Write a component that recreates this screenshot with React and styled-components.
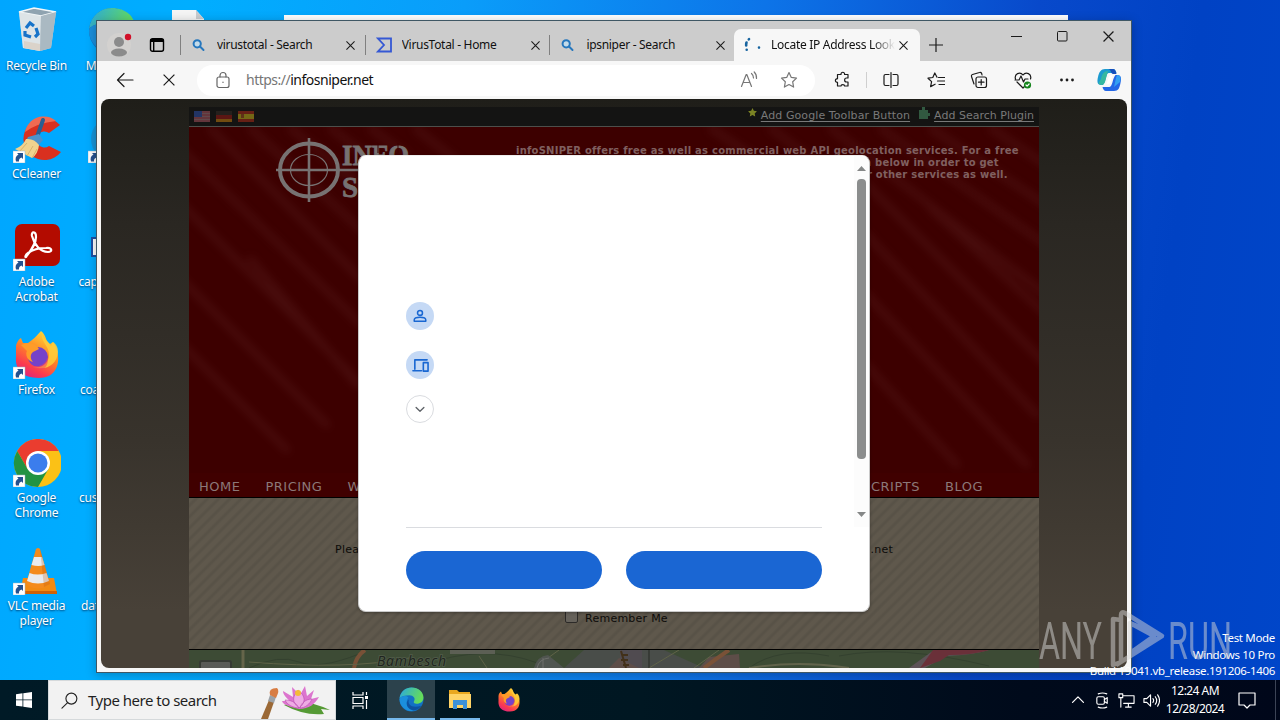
import styled, { createGlobalStyle } from "styled-components";

const GlobalStyle = createGlobalStyle`
  * {
    box-sizing: border-box;
  }
  body {
    margin: 0;
    overflow: hidden;
    font-family: "Noto Sans", "Open Sans", sans-serif;
    font-size: 12px;
  }
  svg {
    display: block;
    flex: none;
  }
`;

const Desktop = styled.div`
  position: relative;
  width: 1280px;
  height: 720px;
  overflow: hidden;
  background: linear-gradient(97deg, #00a6ff 0%, #00aeff 14%, #0a9dfa 34%, #0d74e8 56%, #0849cb 76%, #0042c4 88%, #0046c9 100%);
`;
const IconGrid = styled.div`
  display: grid;
  grid-template-columns: repeat(3, 75px);
  grid-auto-rows: 108px;
`;
const Shortcut = styled.div`
  display: flex;
  flex-direction: column;
  align-items: center;
  padding: 7px 2px 0 0;
  gap: 3px;
`;
const ShortcutLabel = styled.span`
  width: ${(p) => p.$width || 75}px;
  color: white;
  font-size: 12px;
  line-height: 15px;
  letter-spacing: -0.2px;
  text-align: ${(p) => (p.$width ? "left" : "center")};
  white-space: pre-line;
  text-shadow: 0 1px 2px rgba(0, 30, 70, 0.8);
`;

const BackWindow = styled.div`
  position: absolute;
  left: 284px;
  top: 15px;
  width: 784px;
  height: 40px;
  background: white;
`;
const Window = styled.div`
  position: absolute;
  left: 96px;
  top: 20px;
  width: 1036px;
  height: 653px;
  display: flex;
  flex-direction: column;
  background: #f7f7f7;
  border: 1px solid #3f5764;
  box-shadow: 0 2px 10px rgba(0, 0, 0, 0.25);
`;
const TabStrip = styled.div`
  display: flex;
  height: 40px;
  background: #cccccc;
`;
const Profile = styled.div`
  display: flex;
  align-items: center;
  gap: 16px;
  width: 83px;
  padding: 8px 0 0 10px;
`;
const Tab = styled.div`
  display: flex;
  align-items: center;
  width: ${(p) => (p.$active ? 186 : 184.7)}px;
  height: 32px;
  margin-top: 8px;
  padding: 0 ${(p) => (p.$active ? 9 : 7)}px 0 ${(p) => (p.$active ? 10 : 11)}px;
  border-radius: 7px 7px 0 0;
  background: ${(p) => (p.$active ? "#f7f7f7" : "transparent")};
  &::before {
    content: "";
    display: ${(p) => (p.$active ? "none" : "block")};
    width: 1px;
    height: 20px;
    margin-left: -11px;
    margin-right: 10px;
    background: #808080;
  }
`;
const TabIcon = styled.div`
  width: ${(p) => p.$width || 16}px;
`;
const TabTitle = styled.span`
  flex: 1;
  margin-left: 10px;
  color: #111;
  font-size: 12px;
  letter-spacing: -0.3px;
  line-height: 18px;
  white-space: nowrap;
  overflow: hidden;
  mask-image: ${(p) => (p.$fade ? "linear-gradient(90deg, #000 82%, transparent 100%)" : "none")};
`;
const TabActions = styled.div`
  display: flex;
  align-items: center;
  padding: 7px 0 0 9px;
`;
const WindowButtons = styled.div`
  display: flex;
  height: 30px;
  margin-left: auto;
`;
const WindowButton = styled.div`
  display: flex;
  align-items: center;
  justify-content: center;
  width: 46px;
`;
const Toolbar = styled.div`
  display: flex;
  align-items: center;
  height: 38px;
  padding-left: 6px;
`;
const ToolButton = styled.div`
  display: flex;
  align-items: center;
  justify-content: center;
  width: ${(p) => p.$width || 44}px;
  height: 32px;
`;
const Divider = styled.div`
  width: 1px;
  height: 16px;
  margin-left: 1px;
  background: #cfcfcf;
`;
const AddressBar = styled.div`
  display: flex;
  align-items: center;
  width: 618px;
  height: 31px;
  margin: 0 6px;
  padding: 0 17px;
  background: white;
  border-radius: 16px;
`;
const Url = styled.span`
  flex: 1;
  margin: -2px 0 0 14px;
  color: #111;
  font-size: 14px;
  letter-spacing: -0.5px;
  i {
    font-style: normal;
    color: #767676;
  }
`;
const AddressIcons = styled.div`
  display: flex;
  gap: 22px;
`;

const Viewport = styled.div`
  position: relative;
  display: flex;
  justify-content: center;
  height: 569px;
  margin: 0 4px;
  padding-top: 8px;
  overflow: hidden;
  border-radius: 8px;
  background: linear-gradient(#1f1e19 0%, #2a2722 22%, #38332c 60%, #484138 90%, #484138 100%);
`;
const Site = styled.div`
  width: 850px;
  font-family: "DejaVu Sans", Verdana, sans-serif;
`;
const SiteBar = styled.div`
  display: flex;
  align-items: center;
  height: 20px;
  padding: 0 5px;
  background: #141413;
  border-bottom: 1px solid #4d4f4b;
`;
const Flags = styled.div`
  display: flex;
  gap: 6px;
  flex: 1;
`;
const BarLink = styled.span`
  display: flex;
  align-items: flex-start;
  gap: 3px;
  margin: -2px 0 0 9px;
  color: #797979;
  font-size: 11px;
  line-height: 13px;
  letter-spacing: ${(p) => p.$spacing};
  svg {
    margin-top: -2px;
  }
  u {
    text-underline-offset: 2px;
  }
`;
const Hero = styled.div`
  display: grid;
  height: 346px;
  background: #3d0000;
  overflow: hidden;
  > * {
    grid-area: 1 / 1;
  }
`;
const HeroText = styled.div`
  justify-self: end;
  width: 523px;
  padding-top: 18px;
  color: #806060;
  font-size: 10px;
  font-weight: bold;
  line-height: 12px;
  letter-spacing: 0.23px;
`;
const HeroLine = styled.div`
  margin-left: ${(p) => p.$indent || 0}px;
  white-space: nowrap;
`;
const Nav = styled.div`
  display: flex;
  align-items: center;
  gap: 25px;
  height: 25px;
  padding: 2px 56px 0 10px;
  background: #400000;
  border-bottom: 1px solid #000;
  color: #8c7878;
  font-size: 13px;
  letter-spacing: 0.5px;
`;
const NavGap = styled.div`
  flex: 1;
`;
const Login = styled.div`
  display: flex;
  flex-direction: column;
  justify-content: space-between;
  height: 152px;
  padding: 45px 146px 24px;
  border-bottom: 1px solid #000;
  background: repeating-linear-gradient(135deg, #5f584c 0 3px, #585247 5px 6px, #5f584c 8px);
  color: #0d0c0a;
  font-size: 11px;
`;
const Notice = styled.div`
  display: flex;
  justify-content: space-between;
  letter-spacing: 0.25px;
`;
const Remember = styled.div`
  display: flex;
  align-items: center;
  gap: 7px;
  padding-left: 230px;
  letter-spacing: 0.25px;
`;
const Check = styled.span`
  width: 13px;
  height: 13px;
  margin-top: -4px;
  border: 1px solid #2c2a28;
  border-radius: 2px;
  background: #66625b;
`;

const Overlay = styled.div`
  position: absolute;
  inset: 0;
  display: flex;
  align-items: center;
  justify-content: center;
`;
const Dialog = styled.div`
  width: 512px;
  height: 457px;
  overflow: hidden;
  background: white;
  border: 1px solid #c9c9c9;
  border-top-color: #eee;
  border-radius: 8px;
  box-shadow: 0 1px 3px rgba(0, 0, 0, 0.3);
`;
const DialogBody = styled.div`
  display: flex;
  justify-content: space-between;
  height: 371px;
`;
const ChoiceList = styled.div`
  display: flex;
  flex-direction: column;
  padding: 146px 0 0 47px;
`;
const Choice = styled.div`
  display: flex;
  align-items: center;
  justify-content: center;
  width: 28px;
  height: 28px;
  margin-bottom: ${(p) => p.$space || 0}px;
  border-radius: 50%;
  border: ${(p) => (p.$outlined ? "1px solid #dadce0" : "none")};
  background: ${(p) => (p.$outlined ? "white" : "#c5d9f5")};
`;
const Scrollbar = styled.div`
  display: flex;
  flex-direction: column;
  align-items: center;
  width: 15px;
  padding: 10px 0 7px;
  background: #fcfcfc;
`;
const Thumb = styled.div`
  width: 9px;
  height: 280px;
  margin: 8px 0 53px;
  border-radius: 4px;
  background: #8b8d8d;
`;
const DialogFooter = styled.div`
  display: flex;
  gap: 24px;
  margin: 0 47px;
  padding-top: 23px;
  border-top: 1px solid #dadce0;
`;
const PillButton = styled.div`
  flex: 1;
  height: 38px;
  border-radius: 19px;
  background: #1a66d3;
`;

const BuildInfo = styled.div`
  position: absolute;
  right: 5px;
  top: 630px;
  color: white;
  font-size: 11.5px;
  line-height: 16.5px;
  letter-spacing: -0.32px;
  text-align: right;
`;
const Watermark = styled.svg`
  position: absolute;
  left: 1030px;
  top: 600px;
`;

const Taskbar = styled.div`
  position: absolute;
  inset: 680px 0 0 0;
  display: flex;
  background: linear-gradient(90deg, #001a26 0%, #001722 50%, #000a1b 80%, #00071a 100%);
  color: white;
`;
const TaskItem = styled.div`
  display: flex;
  align-items: center;
  justify-content: center;
  width: ${(p) => p.$width || 48}px;
  margin: 0 ${(p) => p.$gap || 0}px;
  background: ${(p) => (p.$active ? "#2c424c" : "transparent")};
  border-bottom: ${(p) => (p.$open ? "2px solid #76b9ed" : "none")};
`;
const SearchBox = styled.div`
  display: flex;
  align-items: center;
  width: 288px;
  padding-left: 12px;
  background: #f2f2f2;
  border: 1px solid #d5d9db;
  color: #1f1f1f;
  font-size: 15px;
  letter-spacing: -0.5px;
  span {
    flex: 1;
    margin-left: 10px;
  }
`;
const Tray = styled.div`
  display: flex;
  align-items: center;
  margin-left: auto;
  padding-right: 4px;
`;
const TrayIcon = styled.div`
  display: flex;
  justify-content: center;
  width: ${(p) => p.$width || 24}px;
`;
const Clock = styled.div`
  width: 64px;
  font-size: 12px;
  line-height: 18px;
  letter-spacing: -0.55px;
  text-align: center;
`;
const TrayEdge = styled.div`
  width: 1px;
  height: 40px;
  margin-left: 8px;
  background: #3c4456;
`;

const ShortcutArrow = () => (
  <g>
    <path d="M0 36h12v12H0z" fill="#fff" stroke="#9fb4c4" strokeWidth=".5" />
    <path d="M3 46.500q-1.500-5 2.500-7L4 38h6v6l-1.600-1.600q-2.800 1-2.400 4.100z" fill="#24518f" />
  </g>
);

const RecycleBin = () => (
  <svg width="48" height="48" viewBox="0 0 48 48">
    <path d="M6 5l15-4 22 4-5 36-11 3-17-3z" fill="#c8d3da" />
    <path d="M6 5l15-4 22 4-15 4z" fill="#8fa3b0" stroke="#f3f7f9" strokeWidth="1.500" />
    <path d="M6 5l22 4-1 35-17-3z" fill="#dfe5e8" opacity=".9" />
    <path d="M43 5L28 9l-1 35 11-3z" fill="#aab9c2" />
    <path d="M11 34l16 3v7l-16-3z" fill="#d8c8b8" opacity=".6" />
    <g fill="none" stroke="#1673c9" strokeWidth="3.200">
      <path d="M13 21l4-5 4 3M23 21l2 6-3 3M18 30l-6-2 0-4" />
    </g>
  </svg>
);

const CCleaner = () => (
  <svg width="48" height="48" viewBox="0 0 48 48">
    <path d="M47 10A21 21 0 1 0 48 37l-12-6a8 8 0 1 1 0-13z" fill="#d9301f" />
    <path d="M43 6A19 19 0 0 0 12 17q12-9 31-11z" fill="#ef6a52" />
    <path d="M30 5l-6 17" stroke="#285f91" strokeWidth="4" strokeLinecap="round" />
    <path d="M15 22l11-3 4 6-5 6-12-5z" fill="#4b92cb" />
    <path d="M13 24q8-1 13 6-1 9-7 13L2 34q8-3 11-10z" fill="#f0d38e" />
    <path d="M14 28L6 37m14-6l-6 10m10-7l-5 9" stroke="#d9b36c" />
    <ShortcutArrow />
  </svg>
);

const Acrobat = () => (
  <svg width="48" height="48" viewBox="0 0 48 48">
    <rect x="2" y="1" width="45" height="42" rx="7" fill="#b30b00" />
    <path d="M13 34c5-7 10-13 10-20 0-6-5-6-4-1 2 8 8 16 16 16 5 0 4-5-2-4-7 0-14 2-18 5-3 2-3 5-2 4z" fill="none" stroke="#fff" strokeWidth="2.200" />
    <ShortcutArrow />
  </svg>
);

const FirefoxArt = () => (
  <g>
    <path d="M3 16c0-4 3-8 5-9l2 5 5 0 4-3c4-3 6-6 9-9 6 5 4 10 9 13l3-2c8 11 9 36-14 36C8 47 2 37 3 26z" fill="url(#fox)" />
    <circle cx="25" cy="26" r="10" fill="#7542c9" />
    <path d="M8 14c8-3 15-2 18 4l-6 3c-3 2-3 7 0 10-6-1-8-8-6-11z" fill="#ff9c28" />
    <path d="M29 1c-2 10 7 13 7 23 0 8-7 14-16 12 13 4 24-2 25-15 0-5-2-8-5-10l-2 4C35 9 29 8 29 1z" fill="#ffce3a" opacity=".85" />
    <path d="M16 32c8 7 18 1 18-6 4 11-9 19-18 6z" fill="#f7405e" opacity=".55" />
  </g>
);

const Firefox = ({ size = 48, shortcut }) => (
  <svg width={size} height={size} viewBox="0 0 48 48">
    <defs>
      <linearGradient id="fox" x1=".8" y1="0" x2=".3" y2="1">
        <stop offset="0" stopColor="#ffe23c" />
        <stop offset=".45" stopColor="#ff8a24" />
        <stop offset=".8" stopColor="#fb3b4f" />
        <stop offset="1" stopColor="#e0257a" />
      </linearGradient>
    </defs>
    <FirefoxArt />
    {shortcut && <ShortcutArrow />}
  </svg>
);

const Chrome = () => (
  <svg width="48" height="48" viewBox="0 0 48 48">
    <circle cx="25" cy="24" r="24" fill="#fbc116" />
    <path d="M4.200 12A24 24 0 0 1 45.800 12H25L14.600 30z" fill="#ea3d2f" />
    <path d="M4.200 12A24 24 0 0 0 25 48l10.400-18-20.800 0z" fill="#229342" />
    <circle cx="25" cy="24" r="12" fill="#fff" />
    <circle cx="25" cy="24" r="9.500" fill="#3b7ded" />
    <ShortcutArrow />
  </svg>
);

const Vlc = () => (
  <svg width="48" height="48" viewBox="0 0 48 48">
    <path d="M10 31h31l3 16H7z" fill="#f28a12" />
    <path d="M7 44h37v3H7z" fill="#cf6206" />
    <path d="M23 2q2-2 4 0l10 35q-12 9-24 0z" fill="#f48b1c" />
    <path d="M21 10h8l2.500 8q-6 2-13 0zM16.500 26q8 3 17 0l2.500 8q-11 5-22 0z" fill="#e9ebee" />
    <path d="M27 2l10 35-6 3z" fill="#b44e00" opacity=".25" />
    <ShortcutArrow />
  </svg>
);

const Edge = ({ size = 48 }) => (
  <svg width={size} height={size} viewBox="0 0 48 48">
    <defs>
      <linearGradient id="edgeTop" x1="0" y1="0" x2="1" y2=".3">
        <stop offset="0" stopColor="#2aa9e0" />
        <stop offset="1" stopColor="#65dc5a" />
      </linearGradient>
    </defs>
    <circle cx="24" cy="24" r="23" fill="#1272c4" />
    <path d="M1 22C3 8 13 1 24 1c14 0 23 9 23 19 0 8-6 12-13 12-5 0-7-2-5-5 3-5-1-11-9-11C11 16 4 18 1 22z" fill="url(#edgeTop)" />
    <path d="M18 20c-6 7-4 20 10 26-13 2-27-8-27-23 2-6 12-8 17-3z" fill="#1b8fdc" />
    <path d="M19 24c-3 9 5 18 24 12-7 11-20 10-24 5-5-5-6-13 0-17z" fill="#0d529f" />
  </svg>
);

const FileDoc = () => (
  <svg width="48" height="48" viewBox="0 0 48 48">
    <path d="M9 3h24l8 9v36H9z" fill="#f5f5f5" />
    <path d="M33 3v9h8z" fill="#c9cccf" />
  </svg>
);

const HiddenApp = ({ color }) => (
  <svg width="48" height="48" viewBox="0 0 48 48">
    <circle cx="25" cy="24" r="22" fill={color} />
    <ShortcutArrow />
  </svg>
);

const CaptureFile = () => (
  <svg width="48" height="48" viewBox="0 0 48 48">
    <path d="M3 14h20v20H3z" fill="#1e50a5" />
    <path d="M5 16h14v16H5z" fill="#fff" />
    <path d="M8 20h6m-3 0v9" stroke="#1e50a5" strokeWidth="2" />
  </svg>
);

const Blank = () => <svg width="48" height="48" />;

const Cross = ({ size = 9, width = 1.2 }) => (
  <svg width={size} height={size} viewBox="0 0 10 10" stroke="#1b1b1b" strokeWidth={width}>
    <path d="M.5.5l9 9m0-9l-9 9" />
  </svg>
);

const BingSearch = () => (
  <svg width="14" height="14" viewBox="0 0 14 14" fill="none" stroke="#2677bd" strokeWidth="2">
    <circle cx="6.200" cy="5.800" r="3.600" fill="#c3dbea" />
    <path d="M9 8.500l3.500 3.500" strokeLinecap="round" />
  </svg>
);

const VirusTotal = () => (
  <svg width="16" height="16" viewBox="0 0 16 16" fill="none" stroke="#3558d4" strokeWidth="1.800">
    <path d="M2 1.500h13v13H2L8 8z" />
  </svg>
);

const Spinner = () => (
  <svg width="17" height="16" viewBox="0 0 17 16" fill="none" stroke="#17649f" strokeWidth="2.600" strokeLinecap="round">
    <path d="M4.800 2.300l.2-.1M2.500 5.500Q2 7 2.200 8.500M2.700 12.700v.1M15 10.500v.1" />
  </svg>
);

const Line = ({ size = 18, children, color = "#1b1b1b", width = 1.2 }) => (
  <svg width={size} height={size} viewBox="0 0 18 18" fill="none" stroke={color} strokeWidth={width} strokeLinejoin="round" strokeLinecap="round">
    {children}
  </svg>
);

const STAR = "M9 1.500l2.300 4.900 5.200.7-3.800 3.700.9 5.300L9 13.500l-4.600 2.600.9-5.300L1.500 7.100l5.200-.7z";

const Copilot = () => (
  <svg width="25" height="24" viewBox="0 0 25 24">
    <path d="M8 1h8c2 0 3 2 3.500 4l-8 0C9 5 9 14 6 17H4c-4 0-4-4-3-8 1-5 3-8 7-8z" fill="#1c9bd0" />
    <path d="M4 11c1-5 3-8 7-8L8 14c-1 3-4 4-6 2-1-1 1-3 2-5z" fill="#36b8a0" />
    <path d="M17 23H9c-2 0-3-2-3.500-4h7c3 0 3-9 6-12h2c4 0 4 4 3 8-1 5-2 8-6.500 8z" fill="#2467e6" />
    <path d="M20 7c4 0 4 3 3 7l-6 5 2-9z" fill="#33a0f2" />
    <path d="M9.500 16l2.300-7c.4-1.400 1.500-2 4-2l-2.300 7c-.5 1.400-1.500 2-4 2z" fill="#fff" />
    <path d="M11 1h5c2 0 3 2 3.500 5H16c-2 0-2-5-5-5z" fill="#164fbb" />
  </svg>
);

const Flag = ({ type }) => (
  <svg width="16" height="11" viewBox="0 0 16 11" opacity=".8">
    {type === "us" && (
      <>
        <path d="M0 0h16v11H0z" fill="#75555a" />
        <path d="M0 1h16M0 4h16M0 7h16M0 10h16" stroke="#7b2832" />
        <path d="M0 0h8v6H0z" fill="#263d79" />
      </>
    )}
    {type === "de" && (
      <>
        <path d="M0 0h16v4H0z" fill="#2a2320" />
        <path d="M0 4h16v4H0z" fill="#6d1713" />
        <path d="M0 8h16v3H0z" fill="#8a5b10" />
      </>
    )}
    {type === "es" && (
      <>
        <path d="M0 0h16v11H0z" fill="#7b2316" />
        <path d="M0 3h16v5H0z" fill="#8c7c16" />
        <path d="M3 3h3v4H3z" fill="#703a1a" />
      </>
    )}
  </svg>
);

// soft diagonal light streaks behind the crosshair logo
const HeroArt = () => (
  <svg width="850" height="346" viewBox="0 0 850 346">
    <defs>
      <filter id="soft" x="-20%" y="-20%" width="140%" height="140%">
        <feGaussianBlur stdDeviation="4" />
      </filter>
    </defs>
    <g filter="url(#soft)" stroke="#6b3030" fill="none" opacity=".26" strokeWidth="7">
      <path d="M20 0l160 160M60 0l120 110M100 0l80 65M140 0l50 38M180 0l40 30M225 0l50 40" />
      <path d="M-10 20l190 185M-10 75l190 190M-10 150l150 150M-10 215l110 110M60 130l110 130" />
      <path d="M520 0l60 40M580 0l60 45M640 0l220 170M690 0l170 120M740 0l120 80M800 0l60 40" />
      <path d="M670 50l190 190M670 100l180 190M670 160l170 180M670 230l100 110M740 80l120 110" />
    </g>
    <g fill="none" stroke="#777272">
      <ellipse cx="120" cy="43" rx="29" ry="26.500" strokeWidth="4" />
      <ellipse cx="120" cy="43" rx="18.500" ry="15.500" strokeWidth="1.200" />
      <path d="M120 11v64M87 43h90" strokeWidth="2.600" />
    </g>
    <g fill="#777272" fontFamily="Liberation Serif, serif" fontWeight="bold" fontSize="29" stroke="#777272" strokeWidth=".8">
      <text x="153" y="38" textLength="67" lengthAdjust="spacingAndGlyphs">INFO</text>
      <text x="153" y="70">S</text>
    </g>
    <path d="M189 16v10M209 16v10" stroke="#3d0000" strokeWidth="1" />
  </svg>
);

const MapStrip = () => (
  <svg width="850" height="18" viewBox="0 0 850 18">
    <path d="M0 0h850v18H0z" fill="#3d4b35" />
    <path d="M60 18q30-14 50-6t60-8M250 10q60-16 110 8M560 18q30-22 80-12M650 6q60-12 150 10" stroke="#34412f" fill="none" />
    <path d="M395 0h80l40 18H375z" fill="#494d49" />
    <path d="M431 0h22v18h-22z" fill="#504b50" />
    <path d="M510 18l10-11 30-3 1 14zM430 8l20 10h-30z" fill="#5d4d48" />
    <path d="M54 0v18" stroke="#65654a" strokeWidth="3" />
    <path d="M176 0q-9 6-11 18M540 0q-12 8-25 18" stroke="#795137" strokeWidth="4" fill="none" />
    <path d="M290 6l8 12M345 18L370 0M505 18L530 0M460 18L490 0M60 12q100 8 160-4" stroke="#5f6348" fill="none" />
    <path d="M261 0h45v4h-45z" fill="#5c5f54" />
    <path d="M720 18l25-18h55q-15 5-43 6l-21 12z" fill="#5d5257" />
    <path d="M345 18q3-12 14-13l16 13" fill="#505550" />
    <path d="M744 0h56q-15 5-40 5l-9 6-20 7z" fill="#6a3039" />
    <path d="M560 18q50-8 100 0" stroke="#62644c" strokeWidth="2" fill="none" />
    <path d="M460 0v18" stroke="#272b24" fill="none" />
    <path d="M348 18q2-9 12-10M354 8v10" stroke="#6c6e6b" fill="none" />
    <path d="M432 1l5 17M433 5h6M432 10h7M434 15h6" stroke="#42301a" strokeWidth="2" />
    <rect x="11" y="11" width="31" height="12" rx="2" fill="#595a57" stroke="#363a34" strokeWidth="2" />
    <text x="188" y="16" fill="#20241e" fontFamily="Open Sans, sans-serif" fontStyle="italic" fontSize="14" textLength="69" stroke="#4d5946" strokeWidth="2" paintOrder="stroke">Bambesch</text>
  </svg>
);

const SearchArt = () => (
  <svg width="76" height="38" viewBox="0 0 76 38">
    <path d="M2 38l8-19 5 2-6 17z" fill="#9b6936" />
    <path d="M9 20l2-6 6 2-2 6z" fill="#9ca2a7" />
    <path d="M11 14q-2-7 7-7 3 2-1 10z" fill="#d87d43" />
    <path d="M25 24q18-8 46 5l-9-1 3 5q-20 2-40-9z" fill="#559a35" />
    <path d="M40 28c-8-2-16-4-17-8l8 0c-4-3-7-7-7-10l10 6-1-10 8 8 5-9 2 10 7-6-3 9 8-2c-4 7-10 12-20 12z" fill="#dc75ce" />
    <path d="M40 27c-8-6-6-12-1-18 8 6 8 13 1 18zm0 0c-5 0-12-3-14-8 8 0 12 4 14 8zm1 0c1-5 6-9 12-9-2 5-7 9-12 9z" fill="#efabe4" stroke="#b74caf" strokeWidth=".6" />
    <circle cx="39" cy="12" r="3" fill="#f3bb38" />
  </svg>
);

const Folder = () => (
  <svg width="24" height="22" viewBox="0 0 24 22">
    <path d="M1 2h8l2 2h11v15H1z" fill="#e9a820" />
    <path d="M1 6h22v14H1z" fill="#ffd467" />
    <path d="M5 12h14v9h-4v-4H9v4H5z" fill="#3d91d8" />
  </svg>
);

const SHORTCUTS = [
  { label: "Recycle Bin", Icon: RecycleBin },
  { label: "Microsoft Edge", Icon: Edge },
  { label: "", Icon: FileDoc },
  { label: "CCleaner", Icon: CCleaner },
  { label: "", Icon: () => <HiddenApp color="#1794d8" /> },
  { label: "", Icon: Blank },
  { label: "Adobe\nAcrobat", Icon: Acrobat },
  { label: "capital", Icon: CaptureFile, width: 66 },
  { label: "", Icon: Blank },
  { label: "Firefox", Icon: () => <Firefox shortcut /> },
  { label: "coastal", Icon: Blank, width: 63 },
  { label: "", Icon: Blank },
  { label: "Google\nChrome", Icon: Chrome },
  { label: "customer", Icon: Blank, width: 65 },
  { label: "", Icon: Blank },
  { label: "VLC media\nplayer", Icon: Vlc },
  { label: "database", Icon: Blank, width: 61 },
];

export default function App() {
  return (
    <Desktop>
      <GlobalStyle />
      <IconGrid>
        {SHORTCUTS.map(({ label, Icon, width }, i) => (
          <Shortcut key={i}>
            <Icon />
            <ShortcutLabel $width={width}>{label}</ShortcutLabel>
          </Shortcut>
        ))}
      </IconGrid>
      <BackWindow />
      <Window>
        <TabStrip>
          <Profile>
            <svg width="26" height="26" viewBox="0 0 26 26">
              <circle cx="12" cy="13" r="12" fill="#d3d1cf" />
              <circle cx="12" cy="10" r="5" fill="#8b8b8b" />
              <ellipse cx="12" cy="20.500" rx="8" ry="4" fill="#8b8b8b" />
              <circle cx="21" cy="5" r="3.200" fill="#d10f28" />
            </svg>
            <svg width="16" height="16" viewBox="0 0 16 16" fill="none" stroke="#000" strokeWidth="1.400">
              <rect x="1.500" y="1.700" width="13" height="12.600" rx="2" />
              <path d="M1.500 3.500h13" strokeWidth="3" />
              <path d="M4.700 4v10" />
            </svg>
          </Profile>
          <Tab>
            <TabIcon><BingSearch /></TabIcon>
            <TabTitle>virustotal - Search</TabTitle>
            <ToolButton $width={14}><Cross /></ToolButton>
          </Tab>
          <Tab>
            <TabIcon><VirusTotal /></TabIcon>
            <TabTitle>VirusTotal - Home</TabTitle>
            <ToolButton $width={14}><Cross /></ToolButton>
          </Tab>
          <Tab>
            <TabIcon><BingSearch /></TabIcon>
            <TabTitle>ipsniper - Search</TabTitle>
            <ToolButton $width={14}><Cross /></ToolButton>
          </Tab>
          <Tab $active>
            <TabIcon $width={17}><Spinner /></TabIcon>
            <TabTitle $fade>Locate IP Address Lookup</TabTitle>
            <ToolButton $width={16}><Cross /></ToolButton>
          </Tab>
          <TabActions>
            <svg width="14" height="14" viewBox="0 0 14 14" stroke="#1b1b1b" strokeWidth="1.200">
              <path d="M7 0v14M0 7h14" />
            </svg>
          </TabActions>
          <WindowButtons>
            <WindowButton>
              <svg width="11" height="11" stroke="#1b1b1b"><path d="M0 5.500h11" /></svg>
            </WindowButton>
            <WindowButton>
              <svg width="11" height="11" stroke="#1b1b1b" fill="none"><rect x=".5" y=".5" width="9.500" height="9.500" rx="1" /></svg>
            </WindowButton>
            <WindowButton><Cross size={11} width={1.1} /></WindowButton>
          </WindowButtons>
        </TabStrip>
        <Toolbar>
          <ToolButton>
            <Line><path d="M17 9H1.500M8 2.500L1.500 9 8 15.500" /></Line>
          </ToolButton>
          <ToolButton><Cross size={12} width={1} /></ToolButton>
          <AddressBar>
            <Line color="#666">
              <rect x="3" y="6" width="12" height="10.500" rx="2" />
              <path d="M6 6V4.500a3 3 0 0 1 6 0V6M9 11v.4" />
            </Line>
            <Url><i>https://</i>infosniper.net</Url>
            <AddressIcons>
              <Line color="#777">
                <path d="M1.500 15.500L6.200 3.500h.6l4.700 12M3 11.500h7M11.500 2.500q2 1.700 2 4.500M14.200 1q2.600 2.500 2.300 6.500" />
              </Line>
              <Line color="#777"><path d={STAR} /></Line>
            </AddressIcons>
          </AddressBar>
          <ToolButton>
            <Line>
              <path d="M3.500 5V3.500H7c-.4-3 4-3 3.600 0H14V7h-1.500c-2.500 0-2.500 4 0 4H14v4h-3.400c0-1.800-3.600-1.800-3.600 0H3.500v-3.700c-2.800 0-2.800-3.600 0-3.600z" />
            </Line>
          </ToolButton>
          <Divider />
          <ToolButton $width={47}>
            <Line><path d="M9 1.500v15M7 3.500H3.500q-1.500 0-1.500 1.500v8q0 1.500 1.500 1.500H7M11 3.500h3.500q1.500 0 1.500 1.500v8q0 1.500-1.500 1.500H11" /></Line>
          </ToolButton>
          <ToolButton $width={43}>
            <Line><path d="M10 6.200L7.800 2 5.800 6.500 1 7.200l3.600 3.400-1 5 4.500-2.400M11.500 6.500h6M10.500 10h7M12 13.500h5.500" /></Line>
          </ToolButton>
          <ToolButton>
            <Line>
              <rect x="6" y="6" width="10.500" height="10.500" rx="2" />
              <path d="M11.200 8.500v5.500M8.500 11.200H14M4 13L1.500 5.500Q1 4 2.500 3.500l7-2Q11 1 11.700 2.500L12 4" />
            </Line>
          </ToolButton>
          <ToolButton>
            <Line>
              <path d="M1.500 8C0 3 6 0 9 4c3-4 9-1 7.500 4M3 11l6 6 2-2M1 9h4l2-4 2.500 6L11 8h3" />
              <circle cx="13.500" cy="14" r="3.600" fill="#13841b" stroke="none" />
              <path d="M12 14l1.100 1.100 2-2.100" stroke="#fff" />
            </Line>
          </ToolButton>
          <ToolButton>
            <svg width="18" height="18" viewBox="0 0 18 18" fill="#1b1b1b">
              <circle cx="3.500" cy="9" r="1.400" />
              <circle cx="9" cy="9" r="1.400" />
              <circle cx="14.500" cy="9" r="1.400" />
            </svg>
          </ToolButton>
          <ToolButton $width={41}><Copilot /></ToolButton>
        </Toolbar>
        <Viewport>
          <Site>
            <SiteBar>
              <Flags>
                <Flag type="us" />
                <Flag type="de" />
                <Flag type="es" />
              </Flags>
              <BarLink $spacing="0.09px">
                <svg width="11" height="13" viewBox="0 0 18 22"><path d={STAR} fill="#7c8424" /></svg>
                <u>Add Google Toolbar Button</u>
              </BarLink>
              <BarLink $spacing="0.01px">
                <svg width="12" height="13" viewBox="0 0 12 13"><path d="M0 3h3V0h3v3h3v3h2v3H9v3H0z" fill="#315940" /></svg>
                <u>Add Search Plugin</u>
              </BarLink>
            </SiteBar>
            <Hero>
              <HeroArt />
              <HeroText>
                <HeroLine>infoSNIPER offers free as well as commercial web API geolocation services. For a free</HeroLine>
                <HeroLine $indent={348}>n below in order to get</HeroLine>
                <HeroLine $indent={351}>r other services as well.</HeroLine>
              </HeroText>
            </Hero>
            <Nav>
              <span>HOME</span>
              <span>PRICING</span>
              <span>W</span>
              <NavGap />
              <span>SCRIPTS</span>
              <span>BLOG</span>
            </Nav>
            <Login>
              <Notice>
                <span>Please</span>
                <span>.net</span>
              </Notice>
              <Remember>
                <Check />
                Remember Me
              </Remember>
            </Login>
            <MapStrip />
          </Site>
          <Overlay>
            <Dialog>
              <DialogBody>
                <ChoiceList>
                  <Choice $space={21}>
                    <Line size={16} color="#1967d2" width={1.7}>
                      <circle cx="9" cy="5.500" r="2.800" />
                      <path d="M2.500 15v-1.500c0-4 13-4 13 0V15z" />
                    </Line>
                  </Choice>
                  <Choice $space={16}>
                    <Line size={17} color="#1967d2" width={1.7}>
                      <path d="M16 3H3v10M1 14.500h9M12 6h5v9h-5z" />
                    </Line>
                  </Choice>
                  <Choice $outlined>
                    <Line size={14} color="#5f6368" width={1.7}><path d="M4 7l5 5 5-5" /></Line>
                  </Choice>
                </ChoiceList>
                <Scrollbar>
                  <svg width="9" height="5"><path d="M0 5L4.500 0 9 5z" fill="#858787" /></svg>
                  <Thumb />
                  <svg width="9" height="5"><path d="M0 0h9L4.500 5z" fill="#858787" /></svg>
                </Scrollbar>
              </DialogBody>
              <DialogFooter>
                <PillButton />
                <PillButton />
              </DialogFooter>
            </Dialog>
          </Overlay>
        </Viewport>
      </Window>

      <BuildInfo>
        <div>Test Mode</div>
        <div>Windows 10 Pro</div>
        <div>Build 19041.vb_release.191206-1406</div>
      </BuildInfo>
      <Watermark width="210" height="80" viewBox="0 0 210 80">
        <g fill="#d4d4d4" opacity=".5" fontFamily="Roboto, sans-serif" fontSize="51" fontWeight="400">
          <text x="9" y="59" textLength="63" lengthAdjust="spacingAndGlyphs">ANY</text>
          <text x="138" y="59" textLength="64" lengthAdjust="spacingAndGlyphs">RUN</text>
        </g>
        <g fill="none" stroke="#d4d4d4" strokeWidth="4.500" opacity=".5" strokeLinejoin="round">
          <path d="M91 20l-8-1v46l8-3V15q0-4 4-2l37 23-46 29M100 23v30l24-17zM100 23l32 13" />
        </g>
      </Watermark>

      <Taskbar>
        <TaskItem>
          <svg width="16" height="16" viewBox="0 0 16 16" fill="#fff">
            <path d="M0 2.200l6.500-.9v6.200H0zM7.300 1.200L16 0v7.500H7.300zM0 8.300h6.500v6.300L0 13.700zM7.300 8.300H16V16l-8.700-1.200z" />
          </svg>
        </TaskItem>
        <SearchBox>
          <Line size={17} color="#222">
            <circle cx="11" cy="7" r="5.800" />
            <path d="M7 11.200L1 17" />
          </Line>
          <span>Type here to search</span>
          <SearchArt />
        </SearchBox>
        <TaskItem>
          <svg width="17" height="17" viewBox="0 0 17 17" fill="none" stroke="#fff" strokeWidth="1.200">
            <path d="M1 0v3h10V0M1 5.500h10v6H1zM1 17v-3h10v3M14.500 0v3M14.500 8v9" />
            <path d="M14.500 4v3" strokeWidth="3" />
          </svg>
        </TaskItem>
        <TaskItem $active $open $gap={3}><Edge size={25} /></TaskItem>
        <TaskItem $open $width={40} $gap={2}><Folder /></TaskItem>
        <TaskItem $gap={3}><Firefox size={24} /></TaskItem>
        <Tray>
          <TrayIcon>
            <Line size={14} color="#fff" width={1.6}><path d="M2 12l7-7 7 7" /></Line>
          </TrayIcon>
          <TrayIcon>
            <Line size={17} color="#fff">
              <rect x="3" y="5" width="8" height="8" rx="1.500" />
              <path d="M11 8l3-2v6l-3-2M4.500 2q4.500-2 9 0M4.500 16q4.500 2 9 0" />
            </Line>
          </TrayIcon>
          <TrayIcon $width={25}>
            <Line size={17} color="#fff">
              <path d="M5 4h12v8H6M11 12v4M8 16h6M1 2h4v4H1zM3 6v10" />
            </Line>
          </TrayIcon>
          <TrayIcon>
            <Line size={17} color="#fff">
              <path d="M1 7h3l4-4v12l-4-4H1zM10.500 7q1.500 2 0 4M13 5q3 4 0 8M15.500 3q4 6 0 12" />
            </Line>
          </TrayIcon>
          <Clock>
            <div>12:24 AM</div>
            <div>12/28/2024</div>
          </Clock>
          <TrayIcon $width={40}>
            <Line size={18} color="#fff"><path d="M1 2h16v12h-5l-3 3-3-3H1z" /></Line>
          </TrayIcon>
          <TrayEdge />
        </Tray>
      </Taskbar>
    </Desktop>
  );
}
